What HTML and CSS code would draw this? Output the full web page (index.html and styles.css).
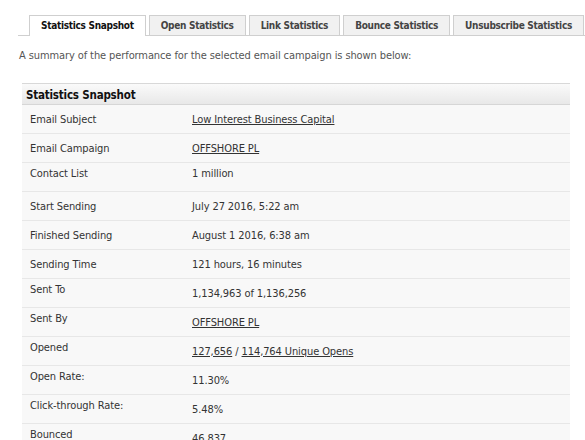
FILE: index.html
```html
<!DOCTYPE html>
<html>
<head>
<meta charset="utf-8">
<link rel="stylesheet" href="styles.css">
</head>
<body>
<div class="page">
  <div class="tabs">
    <div class="tab active">Statistics Snapshot</div>
    <div class="tab">Open Statistics</div>
    <div class="tab">Link Statistics</div>
    <div class="tab">Bounce Statistics</div>
    <div class="tab">Unsubscribe Statistics</div>
  </div>
  <p class="intro">A summary of the performance for the selected email campaign is shown below:</p>
  <div class="stats">
    <div class="stats-head">Statistics Snapshot</div>
    <div class="row"><div class="label">Email Subject</div><div class="value"><a href="#">Low Interest Business Capital</a></div></div>
    <div class="row"><div class="label">Email Campaign</div><div class="value"><a href="#">OFFSHORE PL</a></div></div>
    <div class="row"><div class="label top">Contact List</div><div class="value top">1 million</div></div>
    <div class="row"><div class="label">Start Sending</div><div class="value">July 27 2016, 5:22 am</div></div>
    <div class="row"><div class="label">Finished Sending</div><div class="value">August 1 2016, 6:38 am</div></div>
    <div class="row"><div class="label">Sending Time</div><div class="value">121 hours, 16 minutes</div></div>
    <div class="row"><div class="label top">Sent To</div><div class="value">1,134,963 of 1,136,256</div></div>
    <div class="row"><div class="label top">Sent By</div><div class="value"><a href="#">OFFSHORE PL</a></div></div>
    <div class="row"><div class="label top">Opened</div><div class="value"><a href="#">127,656</a>&nbsp;/&nbsp;<a href="#">114,764 Unique Opens</a></div></div>
    <div class="row"><div class="label top">Open Rate:</div><div class="value">11.30%</div></div>
    <div class="row"><div class="label top">Click-through Rate:</div><div class="value">5.48%</div></div>
    <div class="row"><div class="label top">Bounced</div><div class="value">46,837</div></div>
  </div>
</div>
</body>
</html>
```
FILE: styles.css
```css
html, body {
  margin: 0;
  padding: 0;
  background: #fff;
}
body {
  font-family: "DejaVu Sans Condensed", "DejaVu Sans", sans-serif;
  font-size: 11px;
  line-height: 13px;
  letter-spacing: -0.1px;
  color: #333;
}
.page {
  padding: 15px 0 0 18px;
}
.tabs {
  display: flex;
  align-items: flex-end;
  gap: 3px;
  padding-left: 11px;
  border-bottom: 1px solid #cfcfcf;
  height: 20px;
}
.tab {
  box-sizing: border-box;
  height: 20px;
  padding: 4px 11px 0;
  border: 1px solid #cfcfcf;
  border-bottom: none;
  background: #f1f1f1;
  color: #444;
  font-weight: bold;
  font-size: 10px;
  line-height: 12px;
  letter-spacing: -0.3px;
  white-space: nowrap;
  text-align: center;
}
.tab.active {
  background: #fff;
  color: #111;
  height: 21px;
  margin-bottom: -1px;
}
.intro {
  margin: 13px 0 21px 1px;
  color: #555;
}
.stats {
  margin-left: 4px;
  width: 548px;
}
.stats-head {
  box-sizing: border-box;
  height: 22px;
  border-top: 1px solid #d8d8d8;
  border-bottom: 1px solid #d6d6d6;
  background: linear-gradient(#fafafa, #e8e8e8);
  padding: 4px 4px 0;
  font-weight: bold;
  font-size: 11.5px;
  line-height: 14px;
  letter-spacing: -0.2px;
  color: #111;
}
.row {
  box-sizing: border-box;
  display: grid;
  grid-template-columns: 162px 1fr;
  height: 29px;
  background: #f8f8f8;
  border-bottom: 1px solid #e7e7e7;
}
.label, .value {
  display: flex;
  align-items: center;
  padding-left: 8px;
}
.label.top, .value.top {
  align-items: flex-start;
  padding-top: 4px;
}
.value a {
  color: #333;
  text-decoration: underline;
}
```
